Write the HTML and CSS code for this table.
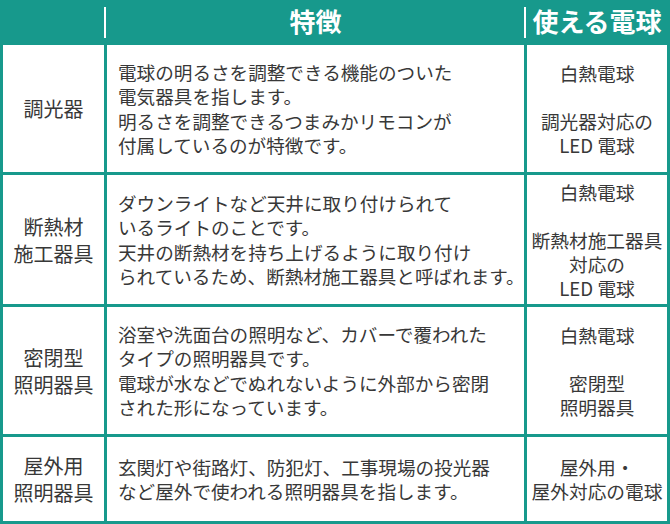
FILE: index.html
```html
<!DOCTYPE html>
<html lang="ja">
<head>
<meta charset="utf-8">
<link rel="stylesheet" href="styles.css">
</head>
<body>
<div class="table">
  <div class="th"></div>
  <div class="th sep">特徴</div>
  <div class="th sep">使える電球</div>

  <div class="cell name">調光器</div>
  <div class="cell desc">電球の明るさを調整できる機能のついた<br>電気器具を指します。<br>明るさを調整できるつまみかリモコンが<br>付属しているのが特徴です。</div>
  <div class="cell bulb">白熱電球<br><br>調光器対応の<br>LED 電球</div>

  <div class="cell name">断熱材<br>施工器具</div>
  <div class="cell desc">ダウンライトなど天井に取り付けられて<br>いるライトのことです。<br>天井の断熱材を持ち上げるように取り付け<br>られているため、断熱材施工器具と呼ばれます。</div>
  <div class="cell bulb">白熱電球<br><br>断熱材施工器具<br>対応の<br>LED 電球</div>

  <div class="cell name">密閉型<br>照明器具</div>
  <div class="cell desc">浴室や洗面台の照明など、カバーで覆われた<br>タイプの照明器具です。<br>電球が水などでぬれないように外部から密閉<br>された形になっています。</div>
  <div class="cell bulb">白熱電球<br><br>密閉型<br>照明器具</div>

  <div class="cell name">屋外用<br>照明器具</div>
  <div class="cell desc">玄関灯や街路灯、防犯灯、工事現場の投光器<br>など屋外で使われる照明器具を指します。</div>
  <div class="cell bulb">屋外用・<br>屋外対応の電球</div>
</div>
</body>
</html>
```
FILE: styles.css
```css
html, body {
  margin: 0;
  padding: 0;
  background: #ffffff;
}

body {
  font-family: "Noto Sans CJK JP", "Noto Sans", sans-serif;
  color: #383838;
}

.table {
  width: 670px;
  height: 524px;
  box-sizing: border-box;
  display: grid;
  grid-template-columns: 101px 417px 140px;
  grid-template-rows: 42px 127px 129px 127px 84px;
  gap: 3px;
  padding: 0 3px 3px 3px;
  background: #17998c;
}

.th {
  position: relative;
  display: flex;
  align-items: center;
  justify-content: center;
  color: #ffffff;
  font-weight: 700;
  font-size: 26px;
  line-height: 1;
  padding-bottom: 1px;
}

.th.sep::before {
  content: "";
  position: absolute;
  left: -3px;
  top: 7px;
  bottom: 4px;
  width: 2px;
  background: #ffffff;
}

.cell {
  background: #ffffff;
  display: flex;
  flex-direction: column;
  justify-content: center;
}

.name {
  align-items: center;
  text-align: center;
  font-size: 20px;
  line-height: 27px;
}

.desc {
  padding-left: 11px;
  font-size: 18.6px;
  line-height: 24.5px;
  white-space: nowrap;
}

.bulb {
  align-items: center;
  text-align: center;
  font-size: 18.7px;
  line-height: 24px;
  white-space: nowrap;
}
```
